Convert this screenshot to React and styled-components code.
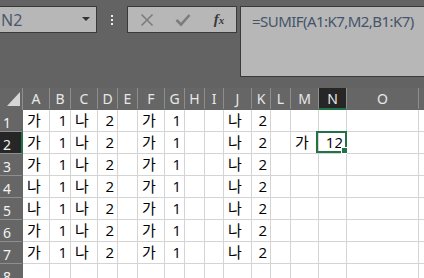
import React from "react";
import styled, { createGlobalStyle } from "styled-components";

const Global = createGlobalStyle`
  html, body { margin: 0; padding: 0; background: #636363; overflow: hidden; }
  #root { width: 424px; height: 278px; overflow: hidden; }
`;

const Page = styled.div`
  width: 424px;
  height: 278px;
  background: #636363;
  overflow: hidden;
  font-family: "Noto Sans", sans-serif;
`;

const TopBar = styled.div`
  display: flex;
  align-items: flex-start;
  height: 88px;
  padding-top: 6px;
  box-sizing: border-box;
`;

const Box = styled.div`
  box-sizing: border-box;
  background: #b7b7b7;
  border: 1px solid #3a3a3a;
`;

const NameBox = styled(Box)`
  width: 97px;
  height: 27px;
  border-left: none;
  display: flex;
  align-items: center;
  justify-content: space-between;
  padding: 0 6px 0 1px;
  font-size: 16px;
  color: #4a586c;
`;

const DropArrow = styled.span`
  width: 0;
  height: 0;
  border-left: 4px solid transparent;
  border-right: 4px solid transparent;
  border-top: 4px solid #333;
  margin-top: -2px;
`;

const Dots = styled.div`
  width: 30px;
  height: 27px;
  display: flex;
  flex-direction: column;
  align-items: center;
  justify-content: center;
  gap: 2px;
  & > span {
    width: 2px;
    height: 2px;
    background: #eeeeee;
  }
`;

const FxButtons = styled(Box)`
  width: 110px;
  height: 27px;
  display: grid;
  grid-template-columns: repeat(3, 36px);
  padding-left: 1px;
  align-items: center;
  justify-items: center;
`;

const Fx = styled.span`
  font-family: "Liberation Serif", serif;
  font-style: italic;
  font-weight: bold;
  color: #3a3a3a;
  font-size: 15px;
  line-height: 1;
  & > small {
    font-size: 11px;
  }
`;

const FormulaBar = styled(Box)`
  flex: 1;
  height: 71px;
  margin-left: 3px;
  margin-right: -6px;
  padding: 3px 0 0 11px;
  font-size: 15px;
  letter-spacing: -0.55px;
  line-height: 22px;
  color: #44546a;
  white-space: nowrap;
  overflow: hidden;
`;

const Sheet = styled.div`
  display: grid;
  grid-template-columns: 23px 27px 21px 27px 20px 20px 27px 20px 20px 19px 28px 19px 20px 28px 28px 72px 1fr;
  grid-auto-rows: 22px;
  background: #fff;
`;

const Corner = styled.div`
  background: #666;
  border-right: 1px solid #8e8e8e;
  box-sizing: border-box;
  position: relative;
`;

const ColHead = styled.div`
  box-sizing: border-box;
  background: ${(p) => (p.$active ? "#262626" : "#666666")};
  border-right: 1px solid #8e8e8e;
  border-bottom: 2px solid ${(p) => (p.$active ? "#217346" : "#666666")};
  color: #e8e8e8;
  font-size: 14px;
  display: flex;
  align-items: center;
  justify-content: center;
  padding-top: 1px;
`;

const RowHead = styled.div`
  box-sizing: border-box;
  background: ${(p) => (p.$active ? "#262626" : "#666666")};
  border-bottom: 1px solid #8e8e8e;
  border-right: 2px solid ${(p) => (p.$active ? "#217346" : "#666666")};
  color: #f2f2f2;
  font-size: 14px;
  display: flex;
  align-items: center;
  padding: 3px 0 0 3px;
`;

const Cell = styled.div`
  box-sizing: border-box;
  position: relative;
  border-right: 1px solid #d4d4d4;
  border-bottom: 1px solid #d4d4d4;
  font-family: "Open Sans", "Noto Sans CJK KR", sans-serif;
  font-size: 15px;
  color: #000;
  display: flex;
  align-items: flex-end;
  justify-content: ${(p) => (p.$num ? "flex-end" : "flex-start")};
  padding: 0 3px 1px 3px;
  line-height: 20px;
  white-space: nowrap;
`;

const Kor = styled.span`
  font-family: "Noto Sans CJK KR", sans-serif;
  font-size: 15px;
  padding-left: 1px;
`;

const Selection = styled.div`
  position: absolute;
  left: -3px;
  top: -1px;
  width: 31px;
  height: 22px;
  box-sizing: border-box;
  border: 2px solid #217346;
  pointer-events: none;
`;

const Handle = styled.div`
  position: absolute;
  right: -3px;
  bottom: -3px;
  width: 5px;
  height: 5px;
  background: #217346;
  border: 1px solid #fff;
  box-sizing: content-box;
`;

const cols = ["A", "B", "C", "D", "E", "F", "G", "H", "I", "J", "K", "L", "M", "N", "O", ""];

const base = (a) => [a, "1", "나", "2", "", "가", "1", "", "", "나", "2", "", "", "", "", ""];
const rows = [
  base("가"),
  (() => {
    const r = base("가");
    r[12] = "가";
    r[13] = "12";
    return r;
  })(),
  base("가"),
  base("나"),
  base("나"),
  base("가"),
  base("가"),
  base("").map(() => ""),
];

export default function App() {
  return (
    <Page>
      <Global />
      <TopBar>
        <NameBox>
          <span>N2</span>
          <DropArrow />
        </NameBox>
        <Dots>
          <span />
          <span />
          <span />
        </Dots>
        <FxButtons>
          <svg width="14" height="14" viewBox="0 0 14 14">
            <path d="M1.5 1.5 L12.5 12.5 M12.5 1.5 L1.5 12.5" stroke="#7c7c7c" strokeWidth="1.6" fill="none" />
          </svg>
          <svg width="16" height="14" viewBox="0 0 16 14">
            <path d="M1.5 7 L6 11.5 L14.5 2" stroke="#7c7c7c" strokeWidth="2.6" fill="none" />
          </svg>
          <Fx>
            f<small>x</small>
          </Fx>
        </FxButtons>
        <FormulaBar>=SUMIF(A1:K7,M2,B1:K7)</FormulaBar>
      </TopBar>
      <Sheet>
        <Corner>
          <svg width="23" height="22" viewBox="0 0 23 22" style={{ position: "absolute", left: 0, top: 0 }}>
            <polygon points="20,4 20,18 7,18" fill="#d6d6d6" />
          </svg>
        </Corner>
        {cols.map((c, i) => (
          <ColHead key={"h" + i} $active={c === "N"}>
            {c}
          </ColHead>
        ))}
        {rows.map((r, ri) => (
          <React.Fragment key={ri}>
            <RowHead $active={ri === 1}>{ri + 1}</RowHead>
            {r.map((v, ci) => {
              const num = /^\d+$/.test(v);
              return (
                <Cell key={ci} $num={num}>
                  {num ? v : v ? <Kor>{v}</Kor> : null}
                  {ri === 1 && ci === 13 ? (
                    <Selection>
                      <Handle />
                    </Selection>
                  ) : null}
                </Cell>
              );
            })}
          </React.Fragment>
        ))}
      </Sheet>
    </Page>
  );
}
